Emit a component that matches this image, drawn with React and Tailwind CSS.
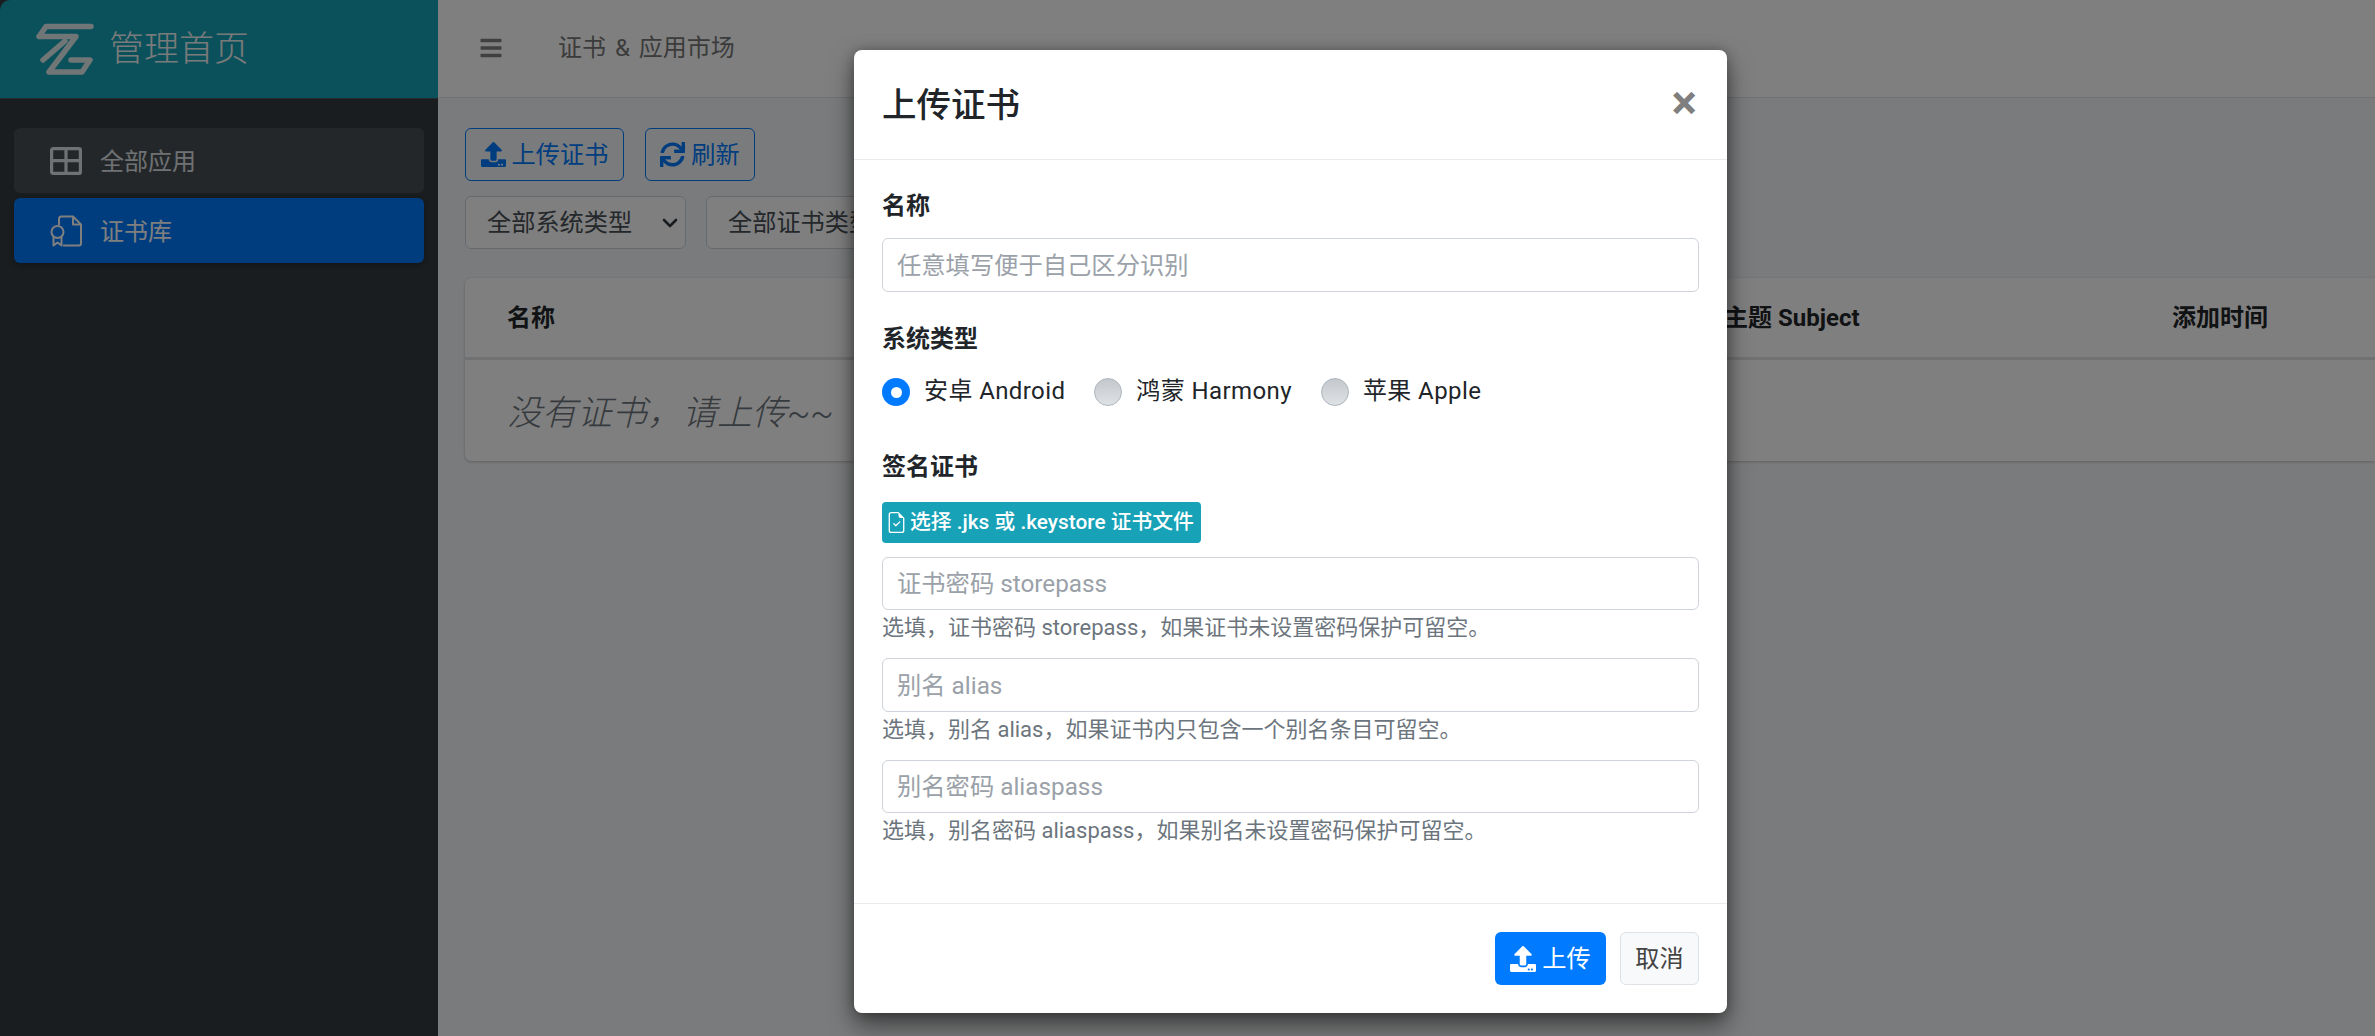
import React from "react";
import { FaUpload, FaSync, FaBars } from "react-icons/fa";
import { BsFileEarmarkCheck } from "react-icons/bs";
import { ChevronDown } from "lucide-react";

const FONT = "font-['Roboto','Noto_Sans_CJK_SC',sans-serif]";

function Logo() {
  return (
    <svg viewBox="0 0 60 56" className="w-[60px] h-[56px] ml-[35px] shrink-0" fill="none" stroke="#e0eced" strokeWidth="5.5" strokeLinecap="round" strokeLinejoin="round">
      <path d="M56,5.5 H11 L4,15.5 H41 L14,51 H47 L55,39 H36" />
      <path d="M30,20 L8,39" />
    </svg>
  );
}

function GridIcon() {
  return (
    <svg viewBox="0 0 32 28" className="w-[32px] h-[28px] shrink-0" fill="none" stroke="currentColor" strokeWidth="3.2" strokeLinejoin="round">
      <rect x="1.6" y="1.6" width="28.8" height="24.8" rx="1.5" />
      <path d="M1.6 13.6 H30.4 M16 1.6 V26.4" />
    </svg>
  );
}

function CertIcon() {
  return (
    <svg viewBox="0 0 32 32" className="w-[32px] h-[32px] shrink-0" fill="none" stroke="currentColor" strokeWidth="2" strokeLinejoin="round">
      <path d="M9 10 V4 Q9 1.5 11.5 1.5 H23 L31 9.5 V28.5 Q31 30.5 29 30.5 H13" />
      <path d="M23 1.5 V9.5 H31" />
      <circle cx="7.5" cy="17" r="6" />
      <path d="M3.5 22 V30.5 L7.5 27.5 L11.5 30.5 V22" />
    </svg>
  );
}

function NavItem({ icon, label, active }) {
  return (
    <div className={`h-[65px] rounded-[6px] flex items-center pl-[36px] gap-[18px] ${active ? "bg-[#007bff] text-white shadow-[0_2px_5px_rgba(0,0,0,0.3)]" : "bg-[#484e54] text-[#dfe2e7]"}`}>
      {icon}
      <span className="text-[24px] pt-[2px]">{label}</span>
    </div>
  );
}

function Field({ placeholder, height = "h-[54px]" }) {
  return (
    <input
      placeholder={placeholder}
      className={`block w-full ${height} rounded-[6px] border border-[#ced4da] bg-white px-[14px] text-[24.3px] outline-none placeholder:text-[#9aa1a8]`}
    />
  );
}

function Help({ children }) {
  return <div className="h-[32px] mt-[2px] text-[22px] leading-[31px] text-[#6c757d] whitespace-nowrap">{children}</div>;
}

function Label({ children }) {
  return <div className="h-[36px] leading-[35px] text-[24px] font-bold text-[#212529]">{children}</div>;
}

function Radio({ checked, label }) {
  return (
    <div className="h-[28px] flex items-center gap-[14px]">
      {checked ? (
        <span className="w-[28px] h-[28px] rounded-full bg-[#007bff] flex items-center justify-center">
          <span className="w-[11px] h-[11px] rounded-full bg-white" />
        </span>
      ) : (
        <span className="w-[28px] h-[28px] rounded-full border border-[#adb5bd] bg-gradient-to-b from-[#c4c8cc] to-[#dfe2e5]" />
      )}
      <span className="text-[24px] leading-[26px] pb-[2px] tracking-[0.4px] text-[#212529] whitespace-nowrap">{label}</span>
    </div>
  );
}

function SelectBox({ label, width }) {
  return (
    <div className={`${width} h-[53px] rounded-[6px] border border-[#ced4da] bg-white flex items-center pl-[21px] pr-[3px] justify-between text-[24.2px] text-[#495057] shrink-0`}>
      <span className="whitespace-nowrap pt-[2px]">{label}</span>
      <ChevronDown className="w-[24px] h-[24px]" strokeWidth={2.6} color="#343a40" />
    </div>
  );
}

function OutlineBtn({ icon, label, width }) {
  return (
    <div className={`${width} h-[53px] rounded-[6px] border border-[#007bff] text-[#007bff] flex items-center justify-center gap-[6px] text-[24.2px]`}>
      {icon}
      <span className="pt-[2px]">{label}</span>
    </div>
  );
}

export default function App() {
  return (
    <div className={`relative w-[2375px] h-[1036px] overflow-hidden flex bg-[#f4f6f9] ${FONT}`}>
      {/* sidebar */}
      <aside className="w-[438px] shrink-0 bg-[#343a40] flex flex-col">
        <div className="h-[99px] bg-[#17a2b8] flex items-center gap-[14px] border-b border-[#4b545c] rounded-tl-[10px]">
          <Logo />
          <span className="text-[35px] font-light text-[#f2f4f5] pt-[2px]">管理首页</span>
        </div>
        <nav className="flex flex-col gap-[5px] pt-[29px] px-[14px]">
          <NavItem icon={<GridIcon />} label="全部应用" />
          <NavItem icon={<CertIcon />} label="证书库" active />
        </nav>
      </aside>

      {/* main */}
      <main className="flex-1 min-w-0 flex flex-col">
        <header className="h-[98px] shrink-0 bg-white border-b border-[#dee2e6] flex items-center pl-[42px] gap-[56px] text-[#808080]">
          <FaBars className="w-[22px] h-[24px] mt-[-2px]" />
          <span className="text-[24px] text-[#767676] pb-[2px] [word-spacing:3px]">证书 &amp; 应用市场</span>
        </header>

        <div className="pl-[27px] pt-[30px] flex flex-col">
          <div className="flex gap-[21px]">
            <OutlineBtn icon={<FaUpload className="w-[25px] h-[25px]" />} label="上传证书" width="w-[159px]" />
            <OutlineBtn icon={<FaSync className="w-[25px] h-[25px]" />} label="刷新" width="w-[110px]" />
          </div>
          <div className="flex gap-[20px] mt-[15px]">
            <SelectBox label="全部系统类型" width="w-[221px]" />
            <SelectBox label="全部证书类型" width="w-[221px]" />
          </div>

          <section className="mt-[29px] h-[183px] bg-white rounded-l-[6px] shadow-[0_0_1px_rgba(0,0,0,0.13),0_1px_3px_rgba(0,0,0,0.2)]">
            <div className="h-[82px] border-b-[3px] border-[#dee2e6] flex items-center pl-[42px] text-[24px] font-bold text-[#212529]">
              <span className="w-[1217px]">名称</span>
              <span className="w-[448px]">主题 Subject</span>
              <span>添加时间</span>
            </div>
            <div className="h-[101px] flex items-center pl-[42px] pt-[7px] text-[35px] italic font-light text-[#6c757d]">
              没有证书，请上传~~
            </div>
          </section>
        </div>
      </main>

      {/* backdrop */}
      <div className="absolute inset-0 bg-black/50" />

      {/* modal */}
      <div className="absolute left-[854px] top-[50px] w-[873px] h-[963px] bg-white rounded-[8px] flex flex-col shadow-[0_12px_24px_rgba(0,0,0,0.5),0_0_12px_rgba(0,0,0,0.25)] text-[#212529]">
        <div className="h-[110px] shrink-0 border-b border-[#e9ecef] flex items-center justify-between pl-[28px] pr-[30px]">
          <h4 className="text-[34.5px] font-medium pt-[2px]">上传证书</h4>
          <span className="text-[48px] leading-none font-bold text-black/50 mt-[-4px]">×</span>
        </div>

        <div className="flex-1 px-[28px] pt-[29px]">
          <Label>名称</Label>
          <div className="mt-[13px]"><Field placeholder="任意填写便于自己区分识别" /></div>

          <div className="mt-[30px]"><Label>系统类型</Label></div>
          <div className="mt-[20px] flex gap-[29px]">
            <Radio checked label="安卓 Android" />
            <Radio label="鸿蒙 Harmony" />
            <Radio label="苹果 Apple" />
          </div>

          <div className="mt-[44px]"><Label>签名证书</Label></div>
          <div className="mt-[16px] w-[319px] h-[41px] rounded-[4px] bg-[#17a2b8] text-white flex items-center gap-[3px] pl-[4px] text-[20.8px] font-medium whitespace-nowrap">
            <BsFileEarmarkCheck className="w-[21px] h-[21px] shrink-0" />
            <span>选择 .jks 或 .keystore 证书文件</span>
          </div>

          <div className="mt-[14px]"><Field placeholder="证书密码 storepass" height="h-[53px]" /></div>
          <Help>选填，证书密码 storepass，如果证书未设置密码保护可留空。</Help>
          <div className="mt-[14px]"><Field placeholder="别名 alias" /></div>
          <Help>选填，别名 alias，如果证书内只包含一个别名条目可留空。</Help>
          <div className="mt-[14px]"><Field placeholder="别名密码 aliaspass" height="h-[53px]" /></div>
          <Help>选填，别名密码 aliaspass，如果别名未设置密码保护可留空。</Help>
        </div>

        <div className="h-[110px] shrink-0 border-t border-[#e9ecef] flex items-center justify-end gap-[14px] pr-[28px]">
          <div className="w-[111px] h-[53px] rounded-[6px] bg-[#007bff] text-white flex items-center justify-center gap-[6px] text-[24.2px]">
            <FaUpload className="w-[26px] h-[26px]" />
            <span className="pt-[2px]">上传</span>
          </div>
          <div className="w-[79px] h-[53px] rounded-[6px] bg-[#f8f9fa] border border-[#dee2e6] text-[#444] flex items-center justify-center text-[24.2px]">
            <span className="pt-[2px]">取消</span>
          </div>
        </div>
      </div>
    </div>
  );
}
